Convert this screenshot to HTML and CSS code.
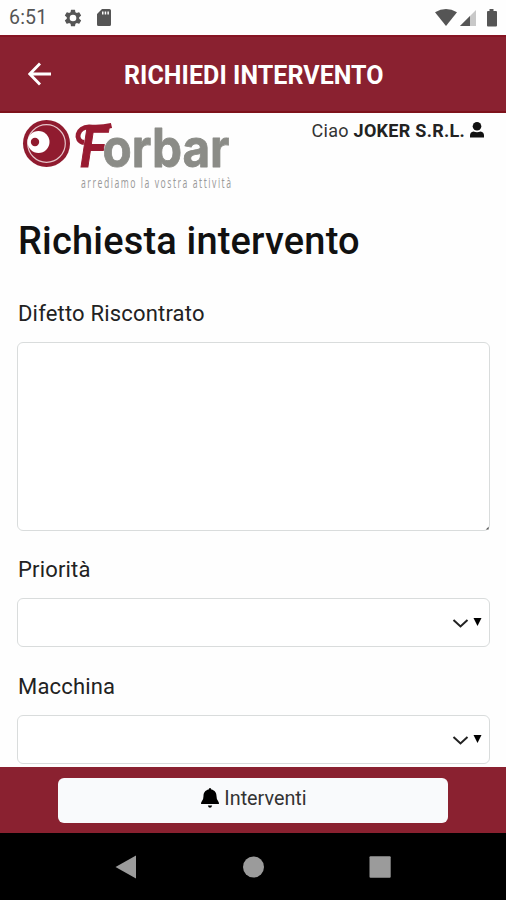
FILE: index.html
```html
<!DOCTYPE html>
<html lang="it">
<head>
<meta charset="utf-8">
<title>Richiedi intervento</title>
<link rel="stylesheet" href="styles.css">
</head>
<body>
<div class="status">
  <span class="clock">6:51</span>
  <svg class="gear" width="20" height="20" viewBox="0 0 24 24"><path fill-rule="evenodd" d="M19.4 13a7.500 7.500 0 0 0 0-2l2.100-1.650a.5.5 0 0 0 .12-.64l-2-3.460a.5.5 0 0 0-.61-.22l-2.490 1a7.300 7.300 0 0 0-1.690-.98l-.38-2.650A.5.500 0 0 0 14 2h-4a.5.5 0 0 0-.49.420l-.38 2.650c-.61.25-1.170.59-1.690.98l-2.490-1a.5.5 0 0 0-.61.220l-2 3.460a.5.5 0 0 0 .12.640L4.570 11a7.900 7.900 0 0 0 0 2l-2.110 1.650a.5.5 0 0 0-.12.640l2 3.460c.12.220.39.3.61.220l2.490-1c.52.400 1.080.73 1.690.98l.38 2.650c.03.240.24.400.49.400h4c.25 0 .46-.18.49-.42l.38-2.650c.61-.25 1.170-.59 1.690-.98l2.490 1c.23.090.49 0 .61-.22l2-3.460a.5.5 0 0 0-.12-.64zM12 16a4 4 0 1 1 0-8 4 4 0 0 1 0 8z"/></svg>
  <svg class="sd" width="16" height="19" viewBox="0 0 16 19"><path fill-rule="evenodd" d="M6 1h7.500Q15 1 15 2.500v14q0 1.500-1.500 1.500h-11Q1 18 1 16.500V6zM6 3.500V6.500H7.500V3.500zm2.700 0V6.500H10.200V3.500zm2.700 0V6.500H12.900V3.500z"/></svg>
  <svg class="signals" width="66" height="20" viewBox="0 0 66 20"><path d="M0 4.300Q11-2.500 22 4.300L11 18z"/><path class="faint" d="M41 2v16H25z"/><path d="M35 8v10H25z"/><path d="M52 4q0-1 1-1h1.500V1h4v2H61q1 0 1 1v13.500q0 1-1 1h-8q-1 0-1-1z"/></svg>
</div>
<header class="bar">
  <svg class="back" width="24" height="24" viewBox="0 0 24 24"><path d="M23 12H2M12 1.500 1.800 12 12 22.500"/></svg>
  <h1>RICHIEDI INTERVENTO</h1>
</header>
<main>
  <div class="brand">
    <svg class="logo" width="216" height="78" viewBox="0 0 216 78">
      <circle class="red" cx="29.500" cy="30.500" r="23.500"/>
      <circle class="ring" cx="29.500" cy="30.500" r="18.800"/>
      <circle class="white" cx="21.500" cy="29" r="11"/>
      <circle class="red" cx="18" cy="29" r="4.200"/>
      <text class="initial" transform="translate(62 54) skewX(-2)" x="0" y="0" textLength="28" lengthAdjust="spacingAndGlyphs">F</text>
      <path class="swash" d="M67 29.500C57 28 60 14 72 14Q84 15 94.500 12.500"/>
      <text class="name" x="85.500" y="54" textLength="127" lengthAdjust="spacingAndGlyphs">orbar</text>
      <text class="tagline" transform="translate(64 75) scale(.62 1)" x="0" y="0" textLength="242" lengthAdjust="spacing">arrediamo la vostra attività</text>
    </svg>
    <p class="hello">Ciao <b>JOKER S.R.L.</b><svg width="16" height="16" viewBox="0 0 16 16"><circle cx="8" cy="4.300" r="4.300"/><path d="M1 15.500V13.500Q1 10 4.500 9.500Q8 11 11.500 9.500Q15 10 15 13.500v2z"/></svg></p>
  </div>
  <h2>Richiesta intervento</h2>
  <form>
    <label for="d">Difetto Riscontrato</label>
    <div class="box area" id="d"><svg width="4" height="4" viewBox="0 0 5 5"><path d="M4.500 1v3.500H1z"/></svg></div>
    <label>Priorità</label>
    <div class="box select"><svg width="30" height="14" viewBox="0 0 30 14"><path class="chev" d="m1.500 4 7 6.500 7-6.500"/><path d="M21.500 2h8l-4 8z"/></svg></div>
    <label>Macchina</label>
    <div class="box select"><svg width="30" height="14" viewBox="0 0 30 14"><path class="chev" d="m1.500 4 7 6.500 7-6.500"/><path d="M21.500 2h8l-4 8z"/></svg></div>
  </form>
</main>
<footer>
  <div class="button"><svg width="18" height="20" viewBox="0 0 18 20"><path d="M9 0q1.300 0 1.300 1.500C14 2.200 15.500 5 15.500 8q0 4 1.800 5.500.7.700.7 2.500H0q0-1.800.7-2.500Q2.500 12 2.500 8c0-3 1.500-5.800 5.200-6.500Q7.700 0 9 0zM6.800 17.500h4.400Q10.500 19.700 9 19.700T6.800 17.500z"/></svg><span>Interventi</span></div>
</footer>
<nav>
  <svg width="22" height="24" viewBox="0 0 22 24"><path d="M21 .5v23L.5 12z"/></svg>
  <svg width="22" height="24" viewBox="0 0 22 24"><circle cx="11.500" cy="12" r="10.500"/></svg>
  <svg width="22" height="24" viewBox="0 0 22 24"><rect x=".5" y="1.300" width="21.200" height="21.400" rx="1"/></svg>
</nav>
</body>
</html>
```
FILE: styles.css
```css
* { box-sizing: border-box; }
body { margin: 0; width: 506px; height: 900px; overflow: hidden; display: flex; flex-direction: column; background: #fefefe; font-family: Roboto, "Liberation Sans", sans-serif; color: #111; }
svg { display: block; flex: none; }
.status { height: 35px; display: flex; align-items: center; padding-left: 9px; fill: #555; color: #555; }
.clock { width: 54px; font-size: 19.500px; letter-spacing: .2px; }
.sd { margin-left: 13px; }
.signals { margin-left: 323px; }
.faint { fill: #c8c8c8; }
.bar { height: 78px; display: flex; align-items: center; background: #8a2130; border-top: 2px solid #861423; border-bottom: 2px solid #7e121b; color: #fff; }
.back { margin-left: 28px; fill: none; stroke: #fff; stroke-width: 2.800; }
h1 { margin: 3px 0 0 72px; font-size: 25px; font-weight: 700; line-height: 30px; letter-spacing: .06px; white-space: nowrap; }
main { height: 654px; flex: none; padding: 0 16px 0 17px; overflow: hidden; }
.brand { display: flex; justify-content: space-between; height: 78px; }
.logo { overflow: visible; }
.red { fill: #901b2f; }
.ring { fill: none; stroke: #e5c5ca; stroke-width: 1.200; }
.white { fill: #fff; }
.initial { font: italic 700 56px Lato, sans-serif; fill: #981b31; stroke: #981b31; stroke-width: 1; }
.swash { fill: none; stroke: #981b31; stroke-width: 5; }
.name { font: 700 53px Inter, sans-serif; fill: #8b8c87; stroke: #8b8c87; stroke-width: .8; stroke-linejoin: round; }
.tagline { font: 14px "Open Sans", sans-serif; fill: #999; }
.hello { margin: 6px 5px 0 0; display: flex; height: 22px; align-items: center; font-size: 18px; letter-spacing: .28px; white-space: pre; color: #333; }
.hello b { color: #222; font-weight: 700; }
.hello svg { margin-left: 4px; fill: #111; }
h2 { margin: 26px 0 0 1px; font-size: 38px; font-weight: 500; line-height: 48px; letter-spacing: .18px; white-space: nowrap; }
form { margin-top: 35px; }
label { display: block; margin-left: 1px; height: 42px; font-size: 22px; line-height: 28px; letter-spacing: .18px; color: #222; }
.box { border: 1.500px solid #d9dcdc; border-radius: 6px; background: #fff; display: flex; }
.area { height: 189px; margin-bottom: 25px; align-items: flex-end; justify-content: flex-end; fill: #555; }
.select { height: 49px; margin-bottom: 26px; align-items: center; justify-content: flex-end; padding-right: 7px; }
.chev { fill: none; stroke: #222; stroke-width: 2; }
footer { height: 66px; flex: none; background: #8a2130; display: flex; justify-content: center; align-items: center; }
.button { width: 390px; height: 45px; border-radius: 6px; background: #f9fafc; display: flex; justify-content: center; align-items: center; gap: 5px; font-size: 19.800px; color: #333; fill: #000; padding: 0 0 4px 2px; }
nav { height: 67px; flex: none; background: #000; fill: #9b9b9b; display: flex; align-items: center; justify-content: center; gap: 105px; }
```
